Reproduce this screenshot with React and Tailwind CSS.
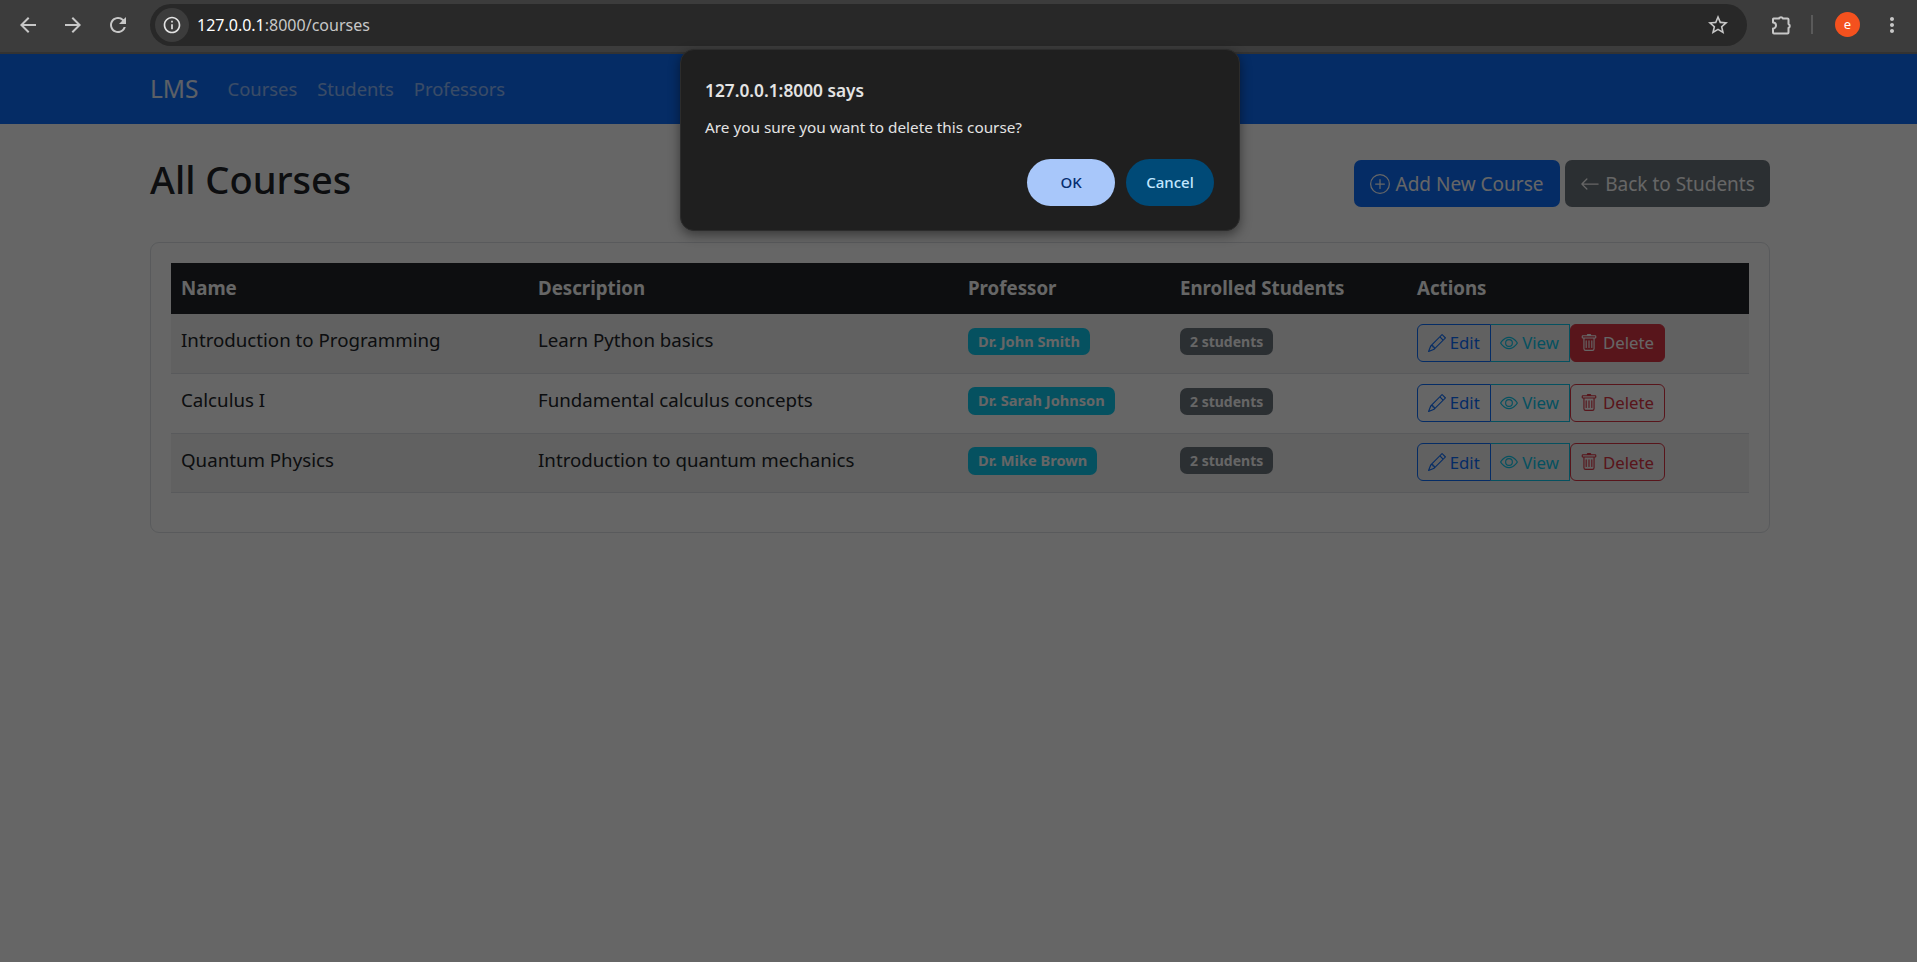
import { MdArrowBack, MdArrowForward, MdRefresh, MdInfoOutline, MdStarBorder, MdMoreVert } from "react-icons/md";
import { BsPencil, BsEye, BsTrash, BsPlusCircle, BsArrowLeft } from "react-icons/bs";

const courses = [
    { name: "Introduction to Programming", description: "Learn Python basics", professor: "Dr. John Smith", deleteActive: true },
    { name: "Calculus I", description: "Fundamental calculus concepts", professor: "Dr. Sarah Johnson" },
    { name: "Quantum Physics", description: "Introduction to quantum mechanics", professor: "Dr. Mike Brown" },
];

function PuzzleIcon() {
    return (
        <svg width="24" height="24" viewBox="0 0 24 24" fill="none" stroke="currentColor" strokeWidth="2" strokeLinejoin="round" className="ml-[22px]">
            <path d="M4.5 5.5H10a2.2 2.2 0 0 1 4 0h4.5a1 1 0 0 1 1 1V11a2.2 2.2 0 0 1 0 4v4.5a1 1 0 0 1-1 1H5a1 1 0 0 1-1-1v-4a3 3 0 0 0 0-6V6a.5.5 0 0 1 .5-.5Z" />
        </svg>
    );
}

function BrowserBar() {
    return (
        <div className="flex h-[54px] shrink-0 items-center border-b-2 border-[#333333] bg-[#3c3c3c] pb-[3px] text-[#c7c7c7]">
            <div className="flex w-[150px] items-center gap-[21px] pl-[16px]">
                <MdArrowBack size={24} />
                <MdArrowForward size={24} />
                <MdRefresh size={24} />
            </div>
            <div className="flex h-[42px] w-[1597px] items-center rounded-full bg-[#282828] pl-[5px] pr-[17px]">
                <div className="flex h-[34px] w-[34px] items-center justify-center rounded-full bg-[#3c3c3c] text-[#e3e3e3]">
                    <MdInfoOutline size={20} />
                </div>
                <div className="ml-[8px] flex-1 text-[16px] text-[#c7c7c7]">
                    <span className="text-white">127.0.0.1</span>:8000/courses
                </div>
                <MdStarBorder size={24} />
            </div>
            <PuzzleIcon />
            <div className="ml-[18px] h-[19px] w-[2px] bg-[#5a5a5a]" />
            <div className="ml-[22px] flex h-[25px] w-[25px] items-center justify-center rounded-full bg-[#f4511e] text-[13px] text-white">e</div>
            <MdMoreVert size={24} className="ml-[20px]" />
        </div>
    );
}

function Navbar() {
    return (
        <nav className="flex h-[70px] items-center bg-[#0d6efd] px-[150px]">
            <span className="mr-[29px] text-[24.5px] text-white/90">LMS</span>
            <div className="flex gap-[20px] text-[18.4px] text-white/55">
                <span>Courses</span>
                <span>Students</span>
                <span>Professors</span>
            </div>
        </nav>
    );
}

function ActionButtons({ deleteActive }) {
    return (
        <div className="flex h-[38px] text-[16.8px]">
            <span className="flex w-[73.5px] items-center justify-center gap-[4px] rounded-l-[6px] border border-[#0d6efd] text-[#0d6efd]">
                <BsPencil size={18} /> Edit
            </span>
            <span className="flex w-[79px] items-center justify-center gap-[4px] border border-l-0 border-[#0dcaf0] text-[#0dcaf0]">
                <BsEye size={18} /> View
            </span>
            <span className={`flex w-[95px] items-center justify-center gap-[5px] rounded-[6px] border border-[#dc3545] ${deleteActive ? "bg-[#dc3545] text-white" : "text-[#dc3545]"}`}>
                <BsTrash size={18} /> Delete
            </span>
        </div>
    );
}

function CoursesTable() {
    return (
        <table className="w-full table-fixed border-collapse text-[18.7px] text-[#212529]">
            <colgroup>
                <col className="w-[357px]" />
                <col className="w-[430px]" />
                <col className="w-[212px]" />
                <col className="w-[237px]" />
                <col />
            </colgroup>
            <thead className="bg-[#212529] text-white">
                <tr className="h-[51px]">
                    {["Name", "Description", "Professor", "Enrolled Students", "Actions"].map((h) => (
                        <th key={h} className="px-[10px] text-left font-bold">{h}</th>
                    ))}
                </tr>
            </thead>
            <tbody>
                {courses.map((c, i) => (
                    <tr key={c.name} className={`h-[59.5px] border-b border-[#dee2e6] ${i % 2 === 0 ? "bg-[#f2f2f2]" : "bg-white"}`}>
                        <td className="px-[10px] pb-[6px]">{c.name}</td>
                        <td className="px-[10px] pb-[6px]">{c.description}</td>
                        <td className="px-[10px] pb-[6px]">
                            <span className="inline-block rounded-[7px] bg-[#0dcaf0] px-[10px] py-[3px] text-[14.6px] font-bold text-white">{c.professor}</span>
                        </td>
                        <td className="px-[10px] pb-[6px]">
                            <span className="inline-block rounded-[7px] bg-[#6c757d] px-[10px] py-[3px] text-[14px] font-bold text-white">2 students</span>
                        </td>
                        <td className="px-[10px] pb-[1px]">
                            <ActionButtons deleteActive={c.deleteActive} />
                        </td>
                    </tr>
                ))}
            </tbody>
        </table>
    );
}

function ConfirmDialog() {
    return (
        <div className="absolute left-[680px] top-[49px] h-[182px] w-[560px] rounded-[14px] border border-[#2c2c2c] bg-[#1f1f1f] pl-[24px] pr-[25px] pt-[29px] text-[#e3e3e3] shadow-[0_4px_12px_rgba(0,0,0,0.45)]">
            <div className="text-[17.3px] font-semibold leading-[24px]">127.0.0.1:8000 says</div>
            <div className="mt-[13px] text-[15.3px] leading-[22px]">Are you sure you want to delete this course?</div>
            <div className="mt-[21px] flex justify-end gap-[11px] text-[15px] font-medium">
                <span className="flex h-[47px] w-[88px] items-center justify-center rounded-full bg-[#a8c7fa] text-[#062e6f]">OK</span>
                <span className="flex h-[47px] w-[88px] items-center justify-center rounded-full bg-[#004a77] text-[#c2e7ff]">Cancel</span>
            </div>
        </div>
    );
}

export default function App() {
    return (
        <div className="relative flex h-[962px] flex-col overflow-hidden bg-white font-['Noto_Sans','Open_Sans',sans-serif]">
            <BrowserBar />
            <div className="relative flex-1">
                <Navbar />
                <main className="pl-[150px] pr-[147px] pt-[36px]">
                    <div className="flex items-start justify-between">
                        <h1 className="-mt-[5px] text-[38px] font-medium leading-[48px] text-[#212529]">All Courses</h1>
                        <div className="flex gap-[5px] text-[19px] text-white">
                            <span className="flex h-[47px] w-[206px] items-center justify-center gap-[5px] rounded-[7px] bg-[#0d6efd] pt-[1px]">
                                <BsPlusCircle size={20} /> Add New Course
                            </span>
                            <span className="flex h-[47px] w-[205px] items-center justify-center gap-[5px] rounded-[7px] bg-[#6c757d] pt-[1px]">
                                <BsArrowLeft size={20} /> Back to Students
                            </span>
                        </div>
                    </div>
                    <div className="mt-[35px] h-[291px] rounded-[9px] border border-[#dee2e6] px-[20px] pt-[20px]">
                        <CoursesTable />
                    </div>
                </main>
                {/* native dialog dims the page */}
                <div className="absolute inset-0 bg-black/60" />
            </div>
            <ConfirmDialog />
        </div>
    );
}
